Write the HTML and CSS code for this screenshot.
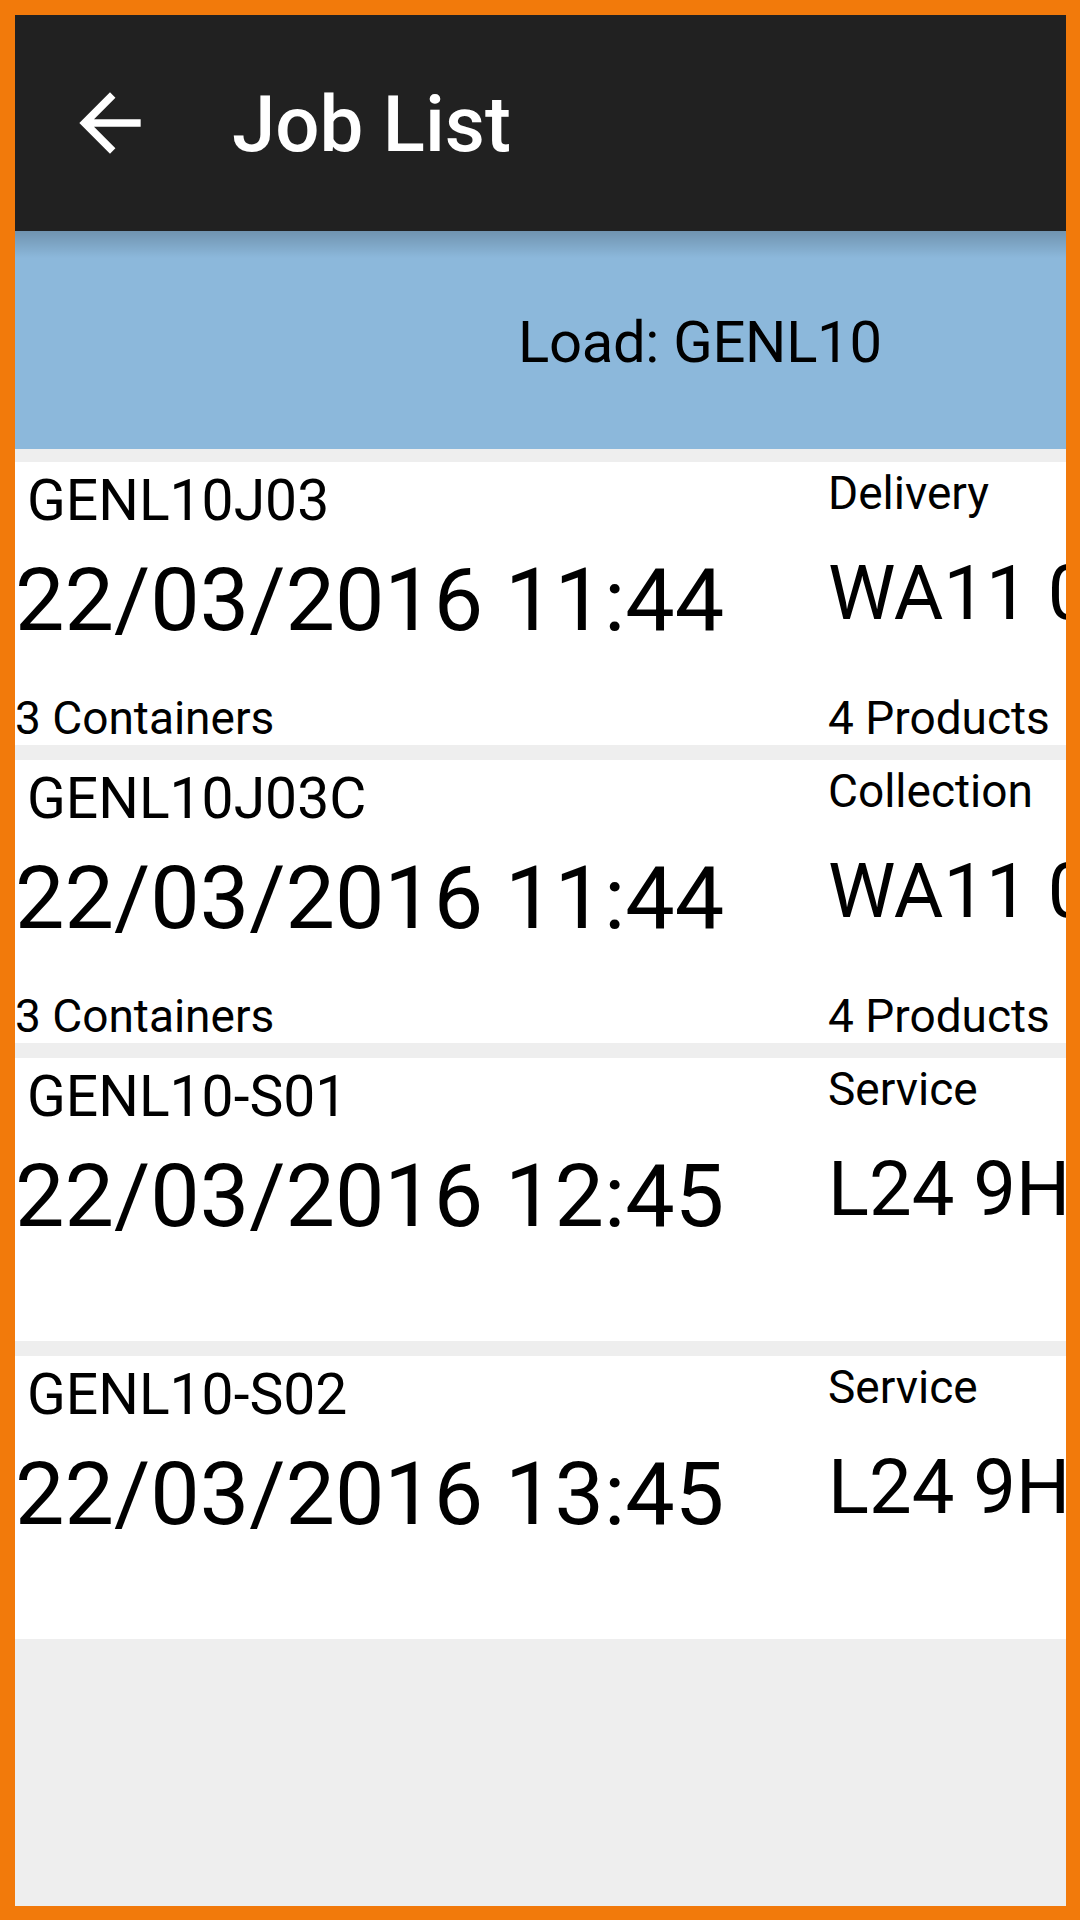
FILE: index.html
```html
<!DOCTYPE html>
<html lang="en">
<head>
  <meta charset="UTF-8">
  <title>Job List</title>
  <link rel="stylesheet" href="styles.css">
</head>
<body>
  <div class="frame">
    <!-- Toolbar mit Zurück-Pfeil -->
    <header class="toolbar">
      <svg class="back-icon" viewBox="0 0 24 24">
        <path d="M20 11H7.83l5.59-5.59L12 4l-8 8 8 8 1.41-1.41L7.83 13H20v-2z" fill="#fff"/>
      </svg>
      <h1 class="title">Job List</h1>
    </header>

    <!-- Ladung -->
    <div class="load">
      <p class="load-text">Load: GENL10</p>
    </div>

    <!-- Jobliste -->
    <div class="job-list">
      <div class="job">
        <div class="col col-left">
          <p class="job-id">GENL10J03</p>
          <p class="job-date">22/03/2016 11:44</p>
          <p class="job-count">3 Containers</p>
        </div>
        <div class="col col-right">
          <p class="job-type">Delivery</p>
          <p class="job-postcode">WA11 0RQ</p>
          <p class="job-count">4 Products</p>
        </div>
      </div>

      <div class="job">
        <div class="col col-left">
          <p class="job-id">GENL10J03C</p>
          <p class="job-date">22/03/2016 11:44</p>
          <p class="job-count">3 Containers</p>
        </div>
        <div class="col col-right">
          <p class="job-type">Collection</p>
          <p class="job-postcode">WA11 0RQ</p>
          <p class="job-count">4 Products</p>
        </div>
      </div>

      <div class="job">
        <div class="col col-left">
          <p class="job-id">GENL10-S01</p>
          <p class="job-date">22/03/2016 12:45</p>
        </div>
        <div class="col col-right">
          <p class="job-type">Service</p>
          <p class="job-postcode">L24 9HJ</p>
        </div>
      </div>

      <div class="job">
        <div class="col col-left">
          <p class="job-id">GENL10-S02</p>
          <p class="job-date">22/03/2016 13:45</p>
        </div>
        <div class="col col-right">
          <p class="job-type">Service</p>
          <p class="job-postcode">L24 9HJ</p>
        </div>
      </div>
    </div>
  </div>
</body>
</html>
```

FILE: styles.css
```css
/* Grundlegendes Reset */
html, body {
  margin: 0;
  padding: 0;
  width: 1080px;
  height: 1920px;
  background: #f27a0b;
  font-family: Roboto, "Noto Sans", sans-serif;
}

p, h1 {
  margin: 0;
}

/* Oranger Rahmen um den Bildschirm */
.frame {
  box-sizing: border-box;
  width: 1080px;
  height: 1920px;
  border-style: solid;
  border-color: #f27a0b;
  border-width: 15px 14px 14px 15px;
  display: flex;
  flex-direction: column;
  overflow: hidden;
  background: #eeeeee;
}

/* Toolbar oben */
.toolbar {
  height: 216px;
  flex-shrink: 0;
  background: #212121;
  display: flex;
  align-items: center;
  padding-left: 49px;
}

.back-icon {
  width: 92px;
  height: 92px;
  flex-shrink: 0;
}

.title {
  margin-left: 76px;
  padding-top: 3px;
  font-size: 78px;
  font-weight: 500;
  color: #fff;
}

/* Blauer Bereich mit der Ladung */
.load {
  height: 218px;
  flex-shrink: 0;
  background: linear-gradient(rgba(0, 0, 0, 0.2), rgba(0, 0, 0, 0) 27px), #8cb8db;
  display: flex;
  align-items: center;
  padding-left: 503px;
}

.load-text {
  padding-top: 4px;
  font-size: 58px;
  letter-spacing: -0.3px;
  color: #000;
}

/* Liste der Jobs */
.job-list {
  flex: 1;
  display: flex;
  flex-direction: column;
  gap: 15px;
  padding-top: 13px;
}

.job {
  height: 283px;
  flex-shrink: 0;
  background: #fff;
  display: grid;
  grid-template-columns: 813px 1fr;
  overflow: hidden;
  color: #000;
}

.col {
  display: flex;
  flex-direction: column;
  white-space: nowrap;
  min-width: 0;
}

.job-id {
  margin-top: 5px;
  padding-left: 12px;
  font-size: 57px;
}

.job-date {
  margin-top: 14px;
  font-size: 88px;
}

.job-type {
  margin-top: 4px;
  font-size: 46px;
}

.job-postcode {
  margin-top: 28px;
  font-size: 76px;
}

.job-count {
  margin-top: auto;
  font-size: 46px;
}
```
